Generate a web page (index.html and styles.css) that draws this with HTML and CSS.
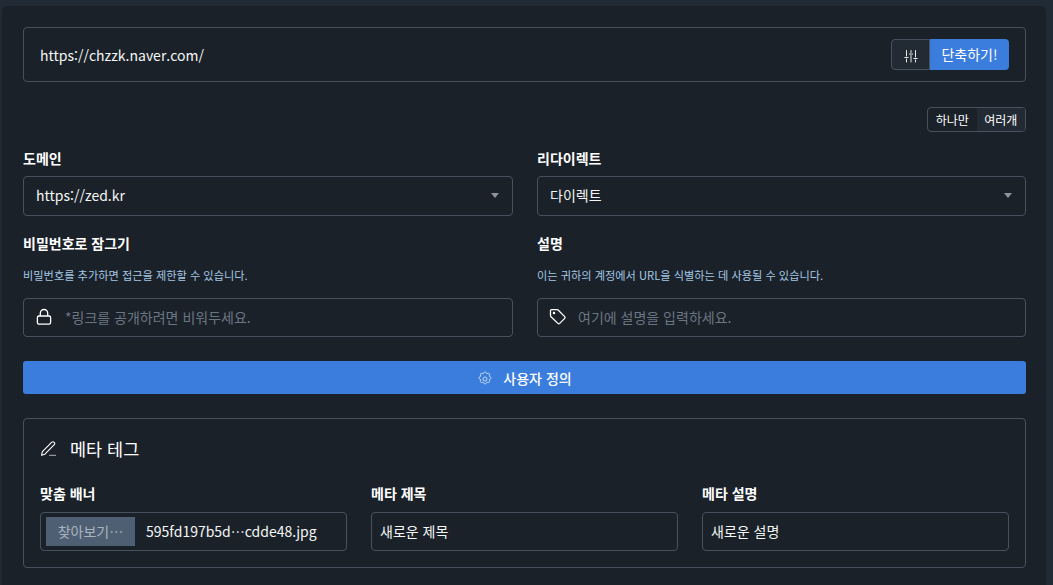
FILE: index.html
```html
<!DOCTYPE html>
<html lang="ko">
<head>
<meta charset="utf-8">
<title>단축</title>
<link rel="stylesheet" href="styles.css">
</head>
<body>
<main class="card">
  <section class="url-box">
    <span class="url-text">https://chzzk.naver.com/</span>
    <div class="url-actions">
      <button class="tune-btn" aria-label="옵션">
        <svg width="14" height="14" viewBox="0 0 14 14" fill="none" stroke="currentColor" stroke-width="1" stroke-linecap="round"><path d="M2.5 1.5v5.5M2.5 10v3M7 1.5v2M7 6.5v6.5M11.5 1.5v6.5M11.5 11v2M.8 8.5h3.4M5.3 5h3.4M9.8 9.5h3.4"/></svg>
      </button>
      <button class="shorten-btn">단축하기!</button>
    </div>
  </section>

  <div class="mode-row">
    <div class="mode-toggle">
      <span class="mode mode-on">하나만</span>
      <span class="mode mode-off">여러개</span>
    </div>
  </div>

  <div class="grid-two">
    <div class="field">
      <div class="label">도메인</div>
      <div class="control select">https://zed.kr<i class="caret"></i></div>
    </div>
    <div class="field">
      <div class="label">리다이렉트</div>
      <div class="control select">다이렉트<i class="caret"></i></div>
    </div>
  </div>

  <div class="grid-two second-row">
    <div class="field">
      <div class="label">비밀번호로 잠그기</div>
      <div class="help">비밀번호를 추가하면 접근을 제한할 수 있습니다.</div>
      <div class="control with-icon">
        <svg class="field-icon" width="18" height="18" viewBox="0 0 18 18" fill="none" stroke="#fff" stroke-width="1.3" stroke-linejoin="round"><rect x="2.4" y="8" width="13.2" height="8.2" rx="1.6"/><path d="M5.3 8V5.2a3.7 3.7 0 0 1 7.4 0V8"/></svg>
        <span class="placeholder">*링크를 공개하려면 비워두세요.</span>
      </div>
    </div>
    <div class="field">
      <div class="label">설명</div>
      <div class="help">이는 귀하의 계정에서 URL을 식별하는 데 사용될 수 있습니다.</div>
      <div class="control with-icon">
        <svg class="field-icon" width="18" height="18" viewBox="0 0 18 18" fill="none" stroke="#fff" stroke-width="1.3" stroke-linejoin="round"><path d="M1.5 2.6a1 1 0 0 1 1-1h5.6a1.4 1.4 0 0 1 1 .4l6.6 6.6a1.3 1.3 0 0 1 0 1.8l-5 5a1.3 1.3 0 0 1-1.8 0L2 8.8a1.4 1.4 0 0 1-.5-1z"/><circle cx="5" cy="5" r=".6" fill="#fff"/></svg>
        <span class="placeholder tag-text">여기에 설명을 입력하세요.</span>
      </div>
    </div>
  </div>

  <button class="custom-btn">
    <svg class="gear" width="16" height="16" viewBox="0 0 24 24" fill="none" stroke="currentColor" stroke-width="1.3" stroke-linejoin="round"><path d="M10.3 2.6c.4-1.7 3-1.7 3.4 0a1.8 1.8 0 0 0 2.6 1.1c1.5-.9 3.3.9 2.4 2.4a1.8 1.8 0 0 0 1.1 2.6c1.7.4 1.7 3 0 3.4a1.8 1.8 0 0 0-1.1 2.6c.9 1.5-.9 3.3-2.4 2.4a1.8 1.8 0 0 0-2.6 1.1c-.4 1.7-3 1.7-3.4 0a1.8 1.8 0 0 0-2.6-1.1c-1.5.9-3.3-.9-2.4-2.4a1.8 1.8 0 0 0-1.1-2.6c-1.7-.4-1.7-3 0-3.4a1.8 1.8 0 0 0 1.1-2.6c-.9-1.5.9-3.3 2.4-2.4a1.8 1.8 0 0 0 2.6-1.1z"/><circle cx="12" cy="12" r="3"/></svg>
    <span>사용자 정의</span>
  </button>

  <section class="meta-box">
    <h2 class="meta-title">
      <svg width="17" height="17" viewBox="0 0 17 17" fill="none" stroke="#fff" stroke-width="1.1" stroke-linejoin="round" stroke-linecap="round"><path d="M1.5 14.3l.9-3.6L11.8 1.2a1.5 1.5 0 0 1 2.2 0l.3.3a1.5 1.5 0 0 1 0 2.2L4.9 13.2z"/><path d="M9.5 14.4h6" stroke="#8a94a0"/></svg>
      <span>메타 테그</span>
    </h2>
    <div class="grid-three">
      <div class="field">
        <div class="label">맞춤 배너</div>
        <div class="control file-input">
          <span class="file-btn">찾아보기⋯</span>
          <span class="file-name">595fd197b5d⋯cdde48.jpg</span>
        </div>
      </div>
      <div class="field">
        <div class="label">메타 제목</div>
        <div class="control plain">새로운 제목</div>
      </div>
      <div class="field">
        <div class="label">메타 설명</div>
        <div class="control plain">새로운 설명</div>
      </div>
    </div>
  </section>
</main>
</body>
</html>
```
FILE: styles.css
```css
* { box-sizing: border-box; }
html, body { height: 100%; }
body {
  margin: 0;
  height: 585px;
  overflow: hidden;
  background: #212b36;
  color: #fff;
  font-family: "Noto Sans CJK KR", "Noto Sans", sans-serif;
  font-size: 14px;
}
button { font-family: inherit; border: 0; cursor: pointer; color: #fff; }
.card {
  margin: 6px 7px 0 2px;
  height: 579px;
  padding: 20px 19px 0 20px;
  background: #1b2129;
  border: 1px solid #1a2027;
  border-bottom: 0;
  border-radius: 6px 6px 0 0;
}
.url-box {
  height: 55px;
  padding: 0 16px 0 16px;
  display: flex;
  align-items: center;
  justify-content: space-between;
  border: 1px solid #48525e;
  border-radius: 4px;
}
.url-text { font-size: 14px; line-height: 24px; color: #f4f7f5; }
.url-actions { display: flex; height: 31px; }
.tune-btn {
  width: 39px;
  display: flex;
  align-items: center;
  justify-content: center;
  background: #222a33;
  border: 1px solid #48525e;
  border-radius: 4px 0 0 4px;
  color: #e8eaec;
  padding: 3px 0 0;
}
.shorten-btn {
  width: 79px;
  background: #3b7ddd;
  border-radius: 0 4px 4px 0;
  font-size: 14px;
  padding: 0 0 2px;
}
.mode-row { display: flex; justify-content: flex-end; margin-top: 25px; }
.mode-toggle {
  display: flex;
  width: 99px;
  height: 25px;
  border: 1px solid #48525e;
  border-radius: 4px;
  overflow: hidden;
  font-size: 12px;
}
.mode { flex: 1; display: flex; align-items: center; justify-content: center; line-height: 1; }
.mode-off { background: #222a33; }
.grid-two { display: grid; grid-template-columns: 490px 489px; column-gap: 24px; margin-top: 16px; }
.second-row { margin-top: 17px; }
.label { font-size: 14px; font-weight: 700; line-height: 20px; height: 20px; margin-bottom: 8px; }
.second-row .label { margin-bottom: 0; }
.help {
  font-size: 11.2px;
  line-height: 16px;
  color: #a3c7e4;
  margin-top: 14px;
  margin-bottom: 15px;
}
.control {
  display: flex;
  align-items: center;
  height: 40px;
  padding-bottom: 2px;
  border: 1px solid #48525e;
  border-radius: 4px;
  font-size: 14px;
  color: #f4f7f5;
}
.select { position: relative; padding-left: 12px; padding-right: 12px; }
.caret {
  position: absolute;
  right: 13px;
  top: 16px;
  width: 0;
  height: 0;
  border-left: 4px solid transparent;
  border-right: 4px solid transparent;
  border-top: 5px solid #8f959b;
}
.with-icon { height: 39px; padding-left: 11px; }
.field-icon { flex: none; }
.placeholder { margin-left: 12px; color: #6b7683; }
.tag-text { margin-left: 11px; }
.custom-btn {
  width: 100%;
  height: 33px;
  margin-top: 24px;
  display: flex;
  align-items: center;
  justify-content: center;
  gap: 10px;
  padding: 0;
  background: #3b7ddd;
  border-radius: 3px;
  font-size: 14px;
  font-weight: 500;
}
.custom-btn svg { color: #d9e6f8; }
.gear { margin-top: 3px; }
.meta-box {
  height: 150px;
  margin-top: 24px;
  padding: 0 16px;
  border: 1px solid #48525e;
  border-radius: 4px;
}
.meta-title {
  display: flex;
  align-items: center;
  gap: 13px;
  height: 26px;
  margin: 17px 0 0;
  font-size: 17.5px;
  font-weight: 400;
  line-height: 26px;
}
.grid-three { display: grid; grid-template-columns: repeat(3, 307px); column-gap: 24px; margin-top: 21px; }
.grid-three .label { margin-bottom: 9px; }
.grid-three .control { height: 39px; }
.file-input { padding: 0 5px; }
.file-btn {
  width: 89px;
  height: 29px;
  display: flex;
  align-items: center;
  justify-content: center;
  background: #4f5f73;
  color: #a9b4bf;
  font-size: 14px;
  padding-bottom: 2px;
}
.file-name { margin-left: 11px; font-size: 14px; padding-bottom: 2px; }
.plain { padding-left: 8px; padding-right: 8px; }
```
